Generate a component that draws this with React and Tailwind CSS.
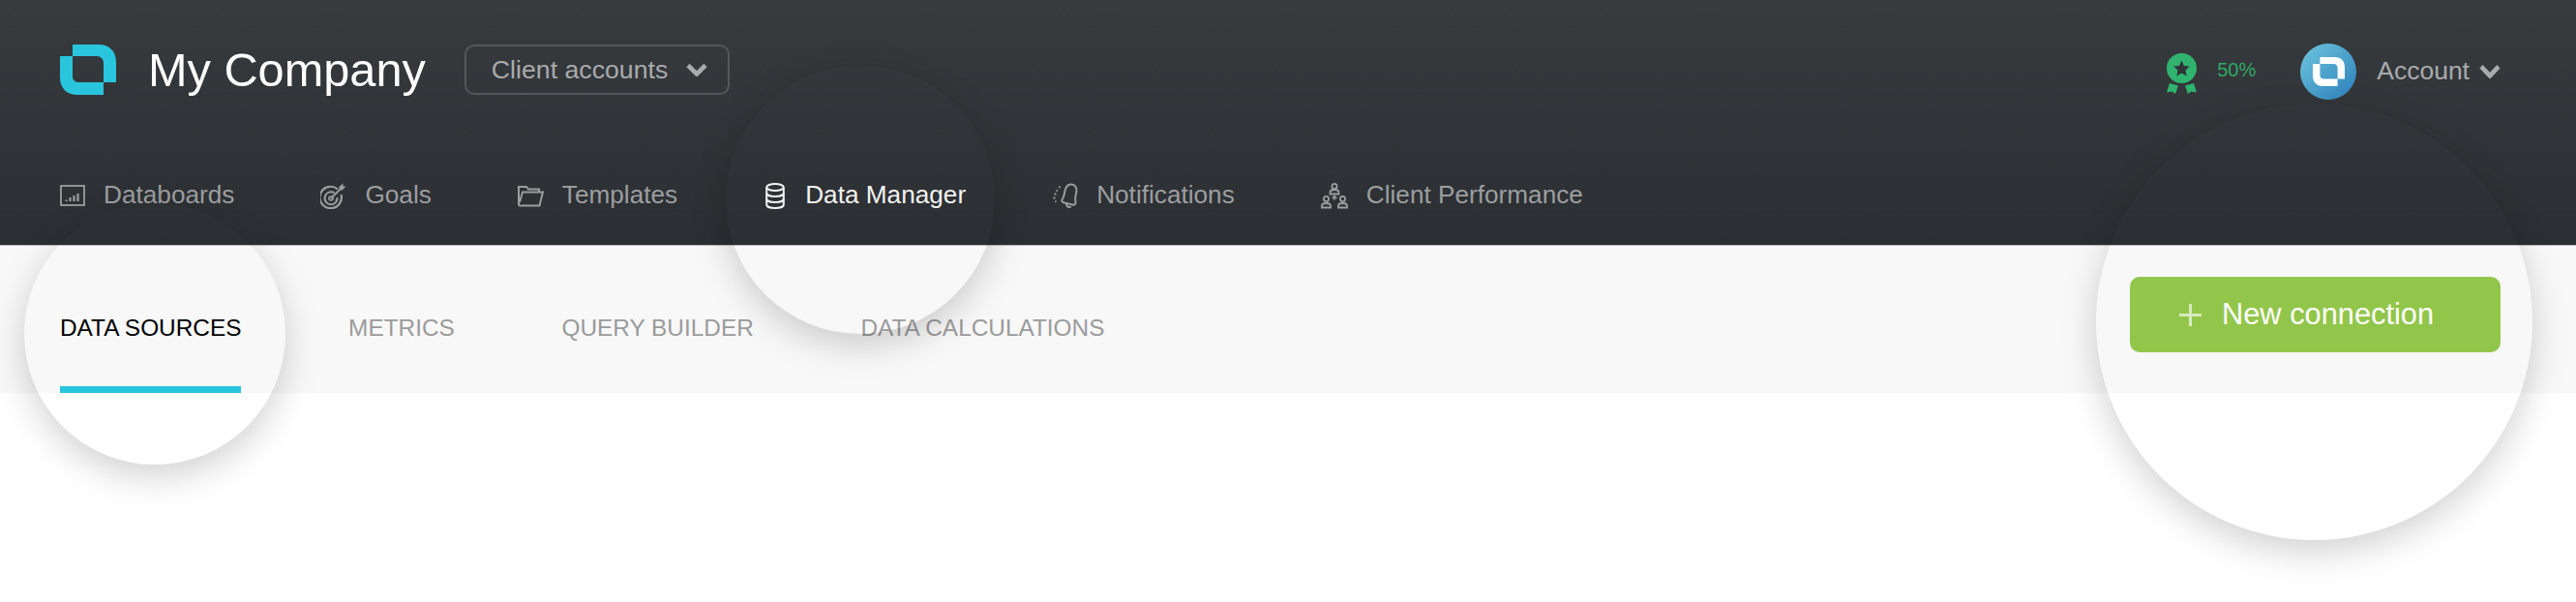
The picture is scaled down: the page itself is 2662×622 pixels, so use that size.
const font = { fontFamily: '"Liberation Sans", Arial, sans-serif' };

function Logo({ width, height, color }) {
  return (
    <svg width={width} height={height} viewBox="0 0 58 52" preserveAspectRatio="none" className="shrink-0">
      <path
        fill={color}
        fillRule="evenodd"
        d="M13 0H40C51 0 58 7 58 18V39H45V52H18C7 52 0 45 0 34V12H13ZM13 12V33C13 37 16 39 20 39H45V19C45 15 42 12 38 12Z"
      />
    </svg>
  );
}

function Chevron({ width, height }) {
  return (
    <svg width={width} height={height} viewBox="0 0 22 14" fill="none" preserveAspectRatio="none" className="shrink-0">
      <path d="M2 2.5 11 11.5 20 2.5" stroke="#a9aaac" strokeWidth="4.6" />
    </svg>
  );
}

function DataboardsIcon() {
  return (
    <svg width="26" height="22" viewBox="0 0 26 22" fill="none" stroke="currentColor">
      <rect x="1" y="1" width="24" height="20" strokeWidth="1.8" />
      <path d="M6.5 17v-1.5M10.5 17v-4M14.5 17v-6M18.5 17v-8" strokeWidth="2.2" />
    </svg>
  );
}

function GoalsIcon() {
  return (
    <svg width="27" height="27" viewBox="0 0 27 27" fill="none" stroke="currentColor">
      <path d="M18 6.5A11.2 11.2 0 1 0 21.5 12" strokeWidth="2.2" />
      <path d="M14.5 10.3A6.5 6.5 0 1 0 17.5 15" strokeWidth="2" />
      <circle cx="11" cy="16" r="2" strokeWidth="1.6" />
      <path d="M11 16 21 6" strokeWidth="2" />
      <path d="M19 4.5 23.5 0.5 23.6 3.5 26.5 3.8 22 8Z" fill="currentColor" stroke="none" />
    </svg>
  );
}

function TemplatesIcon() {
  return (
    <svg width="27" height="23" viewBox="0 0 27 23" fill="none" stroke="currentColor" strokeWidth="2">
      <path d="M1 21.5V2H9L11 4.5H22V7.5" />
      <path d="M1.2 21.5H22.5L26 7.5H5L2 18" />
    </svg>
  );
}

function DatabaseIcon() {
  return (
    <svg width="20" height="27" viewBox="0 0 20 27" fill="none" stroke="currentColor" strokeWidth="2" className="mx-[2px]">
      <ellipse cx="10" cy="4.5" rx="8.8" ry="3.5" />
      <path d="M1.2 4.5V22.5C1.2 24.5 5 26 10 26S18.8 24.5 18.8 22.5V4.5" />
      <path d="M1.2 10.5C1.2 12.5 5 14 10 14S18.8 12.5 18.8 10.5" />
      <path d="M1.2 16.5C1.2 18.5 5 20 10 20S18.8 18.5 18.8 16.5" />
    </svg>
  );
}

function BellIcon() {
  return (
    <svg width="27" height="27" viewBox="0 0 27 27" fill="none" stroke="currentColor">
      <path
        d="M19 1.5C23 1 26 4 25.5 8.5 25 12.5 23 15 24.5 20 25 22 23 23 21 22.5L13 20.5C10 19.5 9.5 18.5 11 16.5 13 14 12.5 11 14 6.5 15 3.5 16.5 2 19 1.5Z"
        strokeWidth="2"
      />
      <path d="M15 21.5C15 24.5 17.5 26 20 24.5" strokeWidth="2" />
      <path d="M7.5 3.5 8.5 5M4.5 7.5 6 8.5M2.5 11.5H4.5M1.5 15.5H3.5M3 19.5 4.5 19" strokeWidth="1.8" />
    </svg>
  );
}

function PerformanceIcon() {
  return (
    <svg width="28" height="27" viewBox="0 0 28 27" fill="none" stroke="currentColor" strokeWidth="1.8">
      <circle cx="14" cy="3.5" r="2.6" />
      <path d="M9.5 11.5V9.5C9.5 8 11 7 14 7S18.5 8 18.5 9.5V11.5Z" />
      <circle cx="5.5" cy="16.5" r="2.6" />
      <path d="M1 25.5V23.5C1 22 2.5 21 5.5 21S10 22 10 23.5V25.5Z" />
      <circle cx="22.5" cy="16.5" r="2.6" />
      <path d="M18 25.5V23.5C18 22 19.5 21 22.5 21S27 22 27 23.5V25.5Z" />
      <path d="M14 13.5V18M11.5 16 14 13.5 16.5 16" strokeWidth="1.4" />
    </svg>
  );
}

function BadgeIcon() {
  return (
    <svg width="31" height="42" viewBox="0 0 31 42" className="shrink-0">
      <circle cx="15.5" cy="15.5" r="15.5" fill="#2fb36f" />
      <path
        fill="#2f3337"
        d="M15.5 7.5 18 12.9 23.8 13.6 19.5 17.6 20.6 23.4 15.5 20.5 10.4 23.4 11.5 17.6 7.2 13.6 13 12.9Z"
      />
      <path fill="#2fb36f" d="M3 31 12 33.5 9 42 5.5 39.5 0 40.5Z" />
      <path fill="#2fb36f" d="M28 31 19 33.5 22 42 25.5 39.5 31 40.5Z" />
    </svg>
  );
}

const navItems = [
  { label: 'Databoards', icon: <DataboardsIcon /> },
  { label: 'Goals', icon: <GoalsIcon /> },
  { label: 'Templates', icon: <TemplatesIcon /> },
  { label: 'Data Manager', icon: <DatabaseIcon />, active: true },
  { label: 'Notifications', icon: <BellIcon /> },
  { label: 'Client Performance', icon: <PerformanceIcon /> },
];

const tabs = ['DATA SOURCES', 'METRICS', 'QUERY BUILDER', 'DATA CALCULATIONS'];

export default function App() {
  return (
    <div style={font} className="relative h-[622px] overflow-hidden bg-white">
      {/* Barra superior */}
      <header className="h-[254px] border-b border-[#b9bbbc] bg-gradient-to-b from-[#373b3e] to-[#2b2e32]">
        <div className="flex h-[103px] items-center pl-[62px] pr-[78px] pt-[45px]">
          <div className="mb-[4px] flex items-center">
            <Logo width={58} height={52} color="#29c5dd" />
            <span className="ml-[33px] text-[48.7px] leading-[52px] text-white">My Company</span>
            <button className="ml-[40px] flex h-[52px] w-[274px] items-center rounded-[10px] border-2 border-[#55585b] pl-[26px] text-[26.7px] text-[#a9aaac]">
              <span>Client accounts</span>
              <span className="ml-[19px]"><Chevron width={22} height={14} /></span>
            </button>
          </div>

          <div className="ml-auto flex items-center">
            <span className="mt-[4px]"><BadgeIcon /></span>
            <span className="ml-[21px] mb-[4px] text-[20px] text-[#2fa968]">50%</span>
            <div className="ml-[46px] flex h-[58px] w-[58px] items-center justify-center rounded-full bg-gradient-to-br from-[#6fc6de] to-[#2b7fb9]">
              <Logo width={33} height={30} color="#ffffff" />
            </div>
            <span className="ml-[21px] text-[26.5px] text-[#a9aaac]">Account</span>
            <span className="ml-[10px] mb-[1px]"><Chevron width={22} height={15} /></span>
          </div>
        </div>

        <nav className="mt-[81px] flex h-[36px] items-center gap-[89px] pl-[62px]">
          {navItems.map(item => (
            <div
              key={item.label}
              className={`flex items-center gap-[19px] text-[26.2px] ${item.active ? 'text-[#f2f2f2]' : 'text-[#9c9ea0]'}`}
            >
              {item.icon}
              <span>{item.label}</span>
            </div>
          ))}
        </nav>
      </header>

      {/* Pestañas */}
      <div className="flex h-[152px] items-start justify-between bg-[#f8f8f8] pl-[62px] pr-[78px]">
        <div className="flex h-full gap-[110.6px]">
          {tabs.map((tab, i) => (
            <div
              key={tab}
              className={`pt-[70px] text-[24.4px] leading-[30px] ${i === 0 ? 'border-b-[7px] border-[#29c5dd] text-black' : 'text-[#9b9b9b]'}`}
            >
              {tab}
            </div>
          ))}
        </div>
        <button className="mt-[32px] flex h-[78px] w-[383px] items-center rounded-[10px] bg-[#92c64b] pl-[51px] text-[30.8px] text-white">
          <span className="relative h-[23px] w-[23px]">
            <span className="absolute left-[10px] top-0 h-[23px] w-[3px] bg-[#d8ebbd]" />
            <span className="absolute left-0 top-[10px] h-[3px] w-[23px] bg-[#d8ebbd]" />
          </span>
          <span className="ml-[21px]">New connection</span>
        </button>
      </div>

      {/* Círculos de resaltado */}
      <div className="pointer-events-none absolute left-[25px] top-[210px] h-[270px] w-[270px] rounded-full shadow-[0_12px_36px_rgba(0,0,0,0.18)]" />
      <div className="pointer-events-none absolute left-[750px] top-[67px] h-[278px] w-[278px] rounded-full shadow-[0_12px_36px_rgba(0,0,0,0.18)]" />
      <div className="pointer-events-none absolute left-[2166px] top-[107px] h-[451px] w-[451px] rounded-full shadow-[0_12px_36px_rgba(0,0,0,0.18)]" />
    </div>
  );
}
